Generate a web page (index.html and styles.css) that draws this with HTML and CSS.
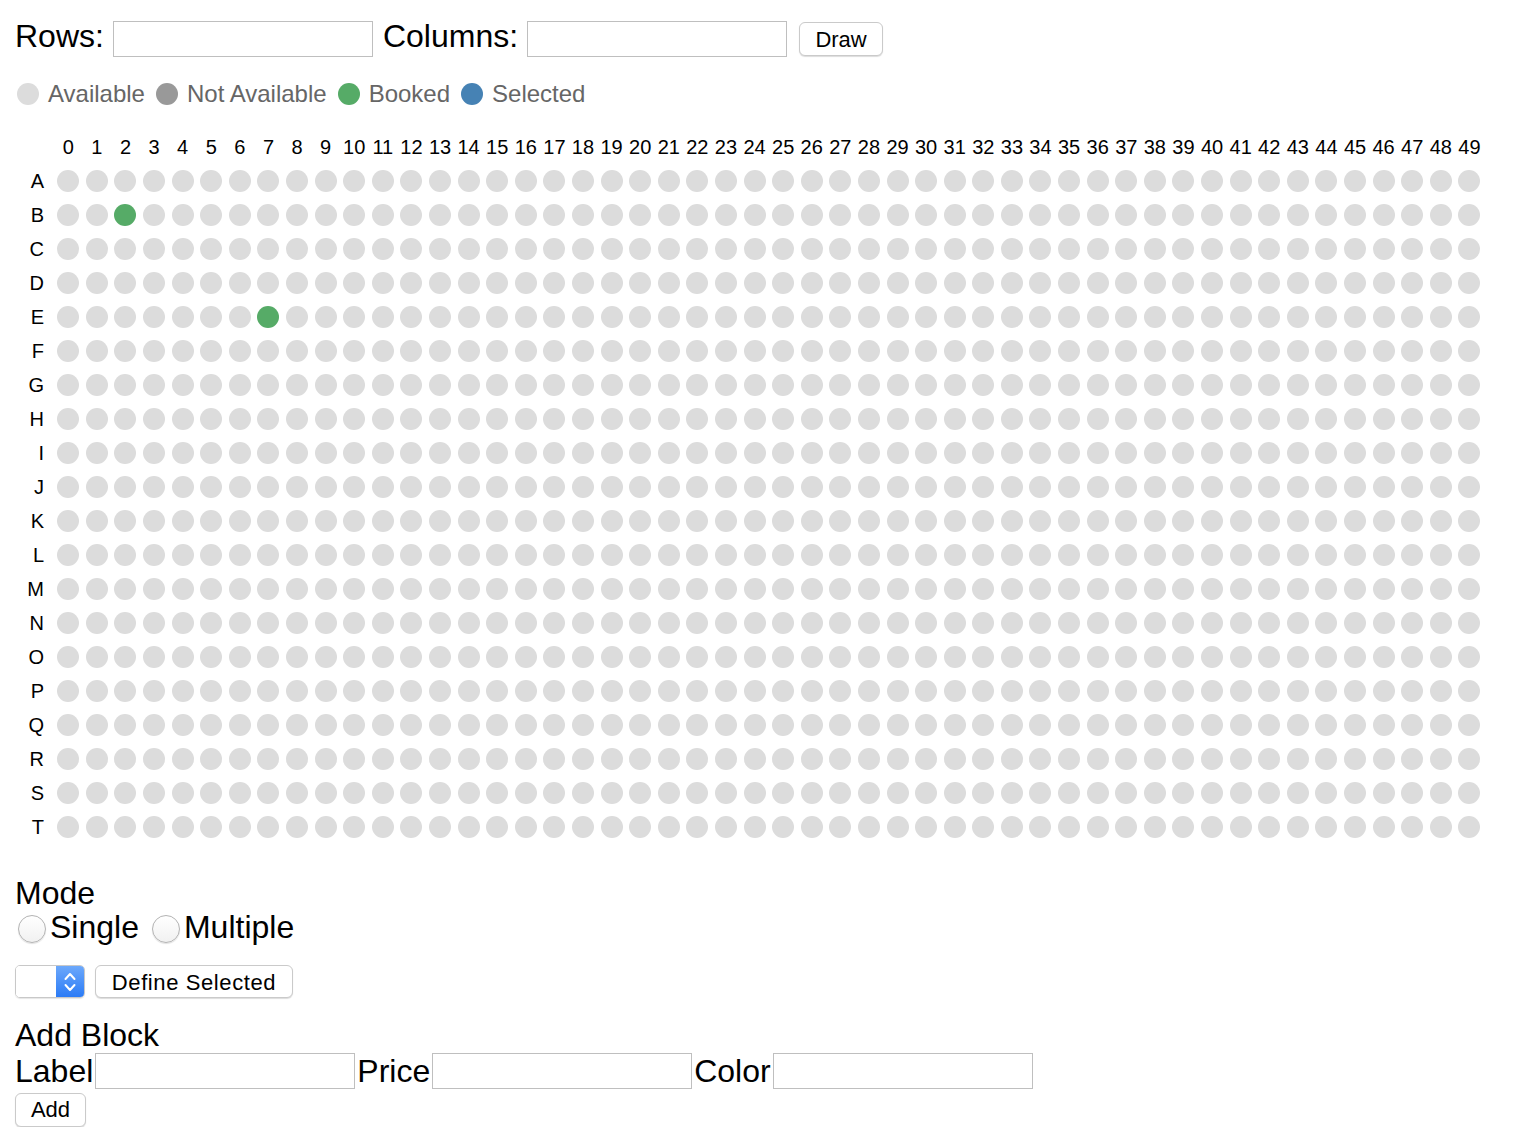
FILE: index.html
```html
<!DOCTYPE html>
<html lang="en">
<head>
<meta charset="utf-8">
<title>Seat Map</title>
<link rel="stylesheet" href="styles.css">
</head>
<body>
<div class="page">
  <div class="toolbar">
    <label class="big-label" for="rows">Rows:</label>
    <input class="text-input toolbar-input" id="rows" type="text">
    <label class="big-label" for="cols">Columns:</label>
    <input class="text-input toolbar-input" id="cols" type="text">
    <button class="btn btn-draw" type="button">Draw</button>
  </div>

  <div class="legend">
    <div class="legend-item"><span class="dot dot-available"></span><span>Available</span></div>
    <div class="legend-item"><span class="dot dot-unavailable"></span><span>Not Available</span></div>
    <div class="legend-item"><span class="dot dot-booked"></span><span>Booked</span></div>
    <div class="legend-item"><span class="dot dot-selected"></span><span>Selected</span></div>
  </div>

  <div class="seatmap" id="seatmap"></div>

  <div class="section mode">
    <div class="section-title">Mode</div>
    <div class="mode-options">
      <label class="option"><input class="radio" type="radio" name="mode"><span>Single</span></label>
      <label class="option"><input class="radio" type="radio" name="mode"><span>Multiple</span></label>
    </div>
  </div>

  <div class="select-row">
    <div class="select">
      <select class="select-native"><option></option></select>
      <span class="select-arrow">
        <svg width="14" height="26" viewBox="0 0 14 26" fill="none" stroke="#fff" stroke-width="2" stroke-linecap="round" stroke-linejoin="round">
          <path d="M2.5 10 L7 5 L11.5 10"/>
          <path d="M2.5 16 L7 21 L11.5 16"/>
        </svg>
      </span>
    </div>
    <button class="btn btn-define" type="button">Define Selected</button>
  </div>

  <div class="section add-block">
    <div class="section-title">Add Block</div>
    <div class="block-row">
      <label for="blabel">Label</label><input class="text-input block-input" id="blabel" type="text">
      <label for="bprice">Price</label><input class="text-input block-input" id="bprice" type="text">
      <label for="bcolor">Color</label><input class="text-input block-input" id="bcolor" type="text">
    </div>
    <button class="btn btn-add" type="button">Add</button>
  </div>
</div>
<script src="script.js"></script>
</body>
</html>
```

FILE: styles.css
```css
* {
  box-sizing: border-box;
}

html,
body {
  margin: 0;
  padding: 0;
  background: #fff;
}

body {
  font-family: "Liberation Sans", Arial, Helvetica, sans-serif;
  color: #000;
}

.page {
  padding: 21px 0 0 15px;
}

/* Top toolbar */
.toolbar {
  display: flex;
  align-items: flex-start;
  height: 36px;
}

.big-label {
  font-size: 32px;
  line-height: 30px;
}

.text-input {
  width: 260px;
  height: 36px;
  border: 1px solid #bfbfbf;
  border-radius: 0;
  background: #fff;
  padding: 0 6px;
  font: 20px "Liberation Sans", Arial, sans-serif;
  outline: none;
}

.toolbar-input {
  margin: 0 10px 0 9px;
}

.btn {
  height: 34px;
  padding: 0;
  border: 1px solid #cacaca;
  border-radius: 6px;
  background: #fff;
  box-shadow: 0 1px 1px rgba(0, 0, 0, 0.14);
  font: 22px "Liberation Sans", Arial, sans-serif;
  color: #000;
}

.btn-draw {
  width: 84px;
  margin: 1px 0 0 2px;
  padding-top: 2px;
}

/* Legend */
.legend {
  display: flex;
  align-items: center;
  height: 22px;
  margin-top: 26px;
  padding-left: 2px;
  font-size: 24px;
  line-height: 24px;
  color: #666;
}

.legend-item {
  display: flex;
  align-items: center;
  margin-right: 11px;
}

.dot {
  width: 22px;
  height: 22px;
  border-radius: 50%;
  margin-right: 9px;
}

.dot-available { background: #dcdcdc; }
.dot-unavailable { background: #999; }
.dot-booked { background: #56ab67; }
.dot-selected { background: #4682b4; }

/* Seat map */
.seatmap {
  display: grid;
  grid-template-columns: 39px repeat(50, 28.6px);
  grid-template-rows: 35px;
  grid-auto-rows: 34px;
  margin-top: 24px;
}

.col-num {
  font-size: 20px;
  line-height: 24px;
  text-align: center;
  align-self: center;
  white-space: nowrap;
}

.row-label {
  font-size: 20px;
  line-height: 24px;
  text-align: right;
  padding-right: 10px;
  align-self: center;
}

.seat {
  width: 22px;
  height: 22px;
  border-radius: 50%;
  background: #dcdcdc;
  justify-self: center;
  align-self: center;
}

.seat.booked { background: #56ab67; }
.seat.unavailable { background: #999; }
.seat.selected { background: #4682b4; }

/* Lower sections */
.section {
  font-size: 32px;
  line-height: 34px;
}

.mode {
  margin-top: 32px;
}

.mode-options {
  display: flex;
  align-items: center;
  height: 34px;
}

.option {
  display: flex;
  align-items: center;
  margin-right: 10px;
}

.radio {
  -webkit-appearance: none;
  appearance: none;
  width: 28px;
  height: 28px;
  margin: 4px 4px 0 3px;
  border: 1px solid #b3b3b3;
  border-radius: 50%;
  background: linear-gradient(#ffffff, #f1f1f1);
  box-shadow: 0 1px 1px rgba(0, 0, 0, 0.12);
}

.select-row {
  display: flex;
  gap: 10px;
  height: 33px;
  margin-top: 21px;
}

.select {
  display: flex;
  width: 70px;
  height: 33px;
  border: 1px solid #c8c8c8;
  border-radius: 5px;
  overflow: hidden;
  box-shadow: 0 1px 1px rgba(0, 0, 0, 0.1);
}

.select-native {
  -webkit-appearance: none;
  appearance: none;
  flex: 1;
  min-width: 0;
  border: 0;
  background: #fff;
  outline: none;
}

.select-arrow {
  display: flex;
  align-items: center;
  justify-content: center;
  width: 28px;
  background: linear-gradient(#6ca8fb, #2b7bf6);
}

.btn-define {
  width: 198px;
  height: 33px;
  letter-spacing: 0.6px;
  padding-top: 2px;
}

.add-block {
  margin-top: 20px;
}

.block-row {
  display: flex;
  align-items: center;
  height: 36px;
  margin-top: 1px;
}

.block-input {
  margin: 0 2px;
}

.btn-add {
  width: 71px;
  margin-top: 3px;
}
```

FILE: script.js
```js
(function () {
  var rows = "ABCDEFGHIJKLMNOPQRST";
  var cols = 50;
  var booked = { "B2": true, "E7": true };
  var map = document.getElementById("seatmap");
  var frag = document.createDocumentFragment();

  var corner = document.createElement("span");
  frag.appendChild(corner);

  for (var c = 0; c < cols; c++) {
    var h = document.createElement("span");
    h.className = "col-num";
    h.textContent = String(c);
    frag.appendChild(h);
  }

  for (var r = 0; r < rows.length; r++) {
    var label = document.createElement("span");
    label.className = "row-label";
    label.textContent = rows[r];
    frag.appendChild(label);
    for (var k = 0; k < cols; k++) {
      var s = document.createElement("span");
      s.className = "seat" + (booked[rows[r] + k] ? " booked" : "");
      frag.appendChild(s);
    }
  }

  map.appendChild(frag);
})();
```
